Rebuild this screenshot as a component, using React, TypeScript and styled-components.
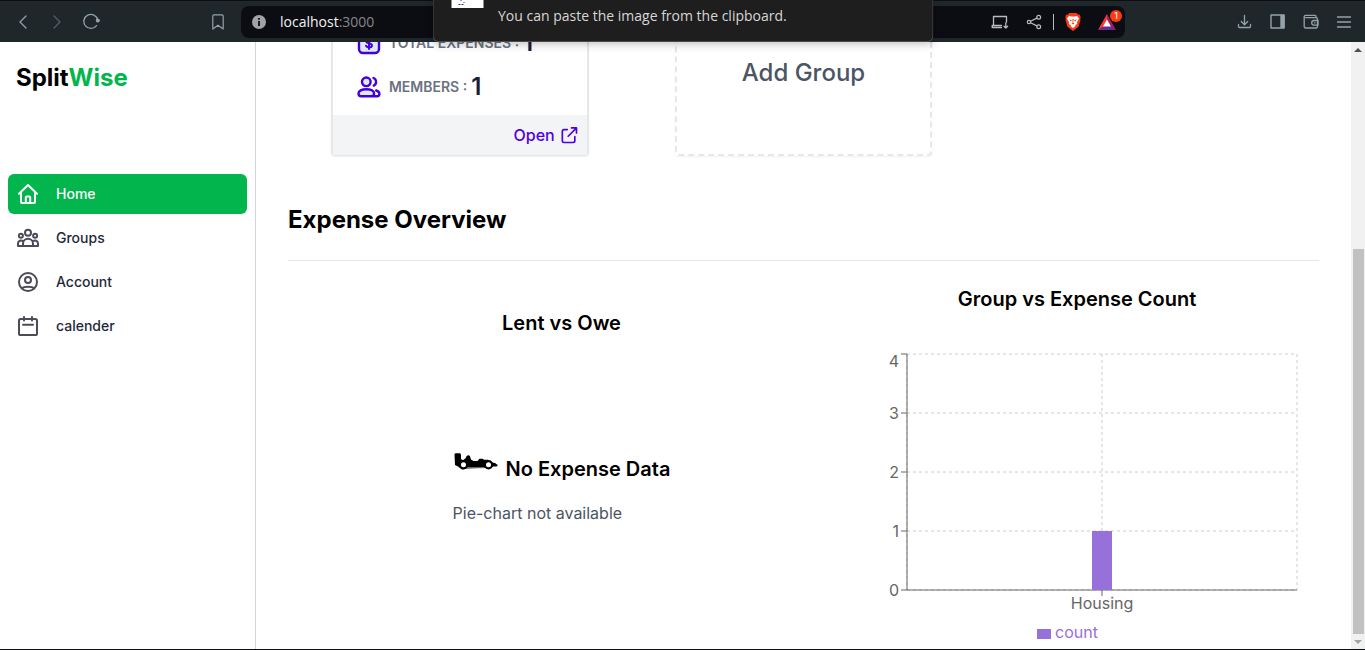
import React from "react";
import styled, { createGlobalStyle } from "styled-components";

const GlobalStyle = createGlobalStyle`
  * { box-sizing: border-box; }
  body {
    margin: 0;
    background: #fff;
    color: #000;
    font-family: Inter, "Liberation Sans", sans-serif;
    font-size: 16px;
    line-height: 24px;
  }
  h1, h2, h3, p, ul, dl, dd { margin: 0; padding: 0; }
  ul { list-style: none; }
  a { color: inherit; text-decoration: none; }
  button { border: 0; padding: 0; background: none; color: inherit; font: inherit; cursor: pointer; }
  svg { display: block; flex: none; }
`;

const Screen = styled.div`
  display: flex;
  flex-direction: column;
  height: 100vh;
  overflow: hidden;
  border-bottom: 1px solid #0d0e13;
`;

/* Browser chrome */

const Toolbar = styled.header`
  position: relative;
  display: flex;
  align-items: center;
  flex: none;
  height: 42px;
  border-top: 1px solid #0d0e13;
  background: #20272a;
  color: #93a2a9;
`;

const ToolGroup = styled.div<{ $side: "left" | "right" }>`
  display: flex;
  align-items: center;
  justify-content: ${(p) => (p.$side === "left" ? "flex-start" : "flex-end")};
  width: ${(p) => (p.$side === "left" ? 241 : 240)}px;
  padding: ${(p) => (p.$side === "left" ? "0 14px" : "0 12px")};
  gap: ${(p) => (p.$side === "left" ? 16 : 15)}px;
`;

const ToolButton = styled.button<{ $dim?: boolean; $push?: boolean }>`
  display: grid;
  place-items: center;
  width: 18px;
  height: 20px;
  opacity: ${(p) => (p.$dim ? 0.45 : 1)};
  margin-left: ${(p) => (p.$push ? "auto" : "0")};
`;

const AddressBar = styled.div`
  display: flex;
  align-items: center;
  flex: 1;
  height: 32px;
  padding: 0 9px 0 11px;
  border-radius: 8px;
  background: #0c0d12;
  color: #b9bcbf;
`;

const Url = styled.div`
  flex: 1;
  padding-left: 14px;
  outline: none;
  color: #f1f2f3;
  font: 14px/20px "Open Sans", "Noto Sans", sans-serif;
`;

const Port = styled.span`
  color: #85888c;
`;

const AddressTools = styled.div`
  display: flex;
  align-items: center;
  gap: 16px;
`;

const Divider = styled.span`
  width: 1px;
  height: 16px;
  margin: 0 -6px;
  background: #b9bcbf;
`;

const Notice = styled.div`
  position: absolute;
  top: -1px;
  left: 50%;
  z-index: 2;
  display: flex;
  width: 501px;
  height: 42px;
  transform: translateX(-50%);
  padding: 0 18px;
  border: 1px solid #4b4b4b;
  border-top: 0;
  border-radius: 0 0 6px 6px;
  background: #1e1e1e;
  box-shadow: 0 2px 8px rgba(0, 0, 0, 0.25);
  color: #d6d6d6;
  font: 14px/20px "Open Sans", "Noto Sans", sans-serif;
`;

const NoticeThumb = styled.div`
  width: 32px;
  height: 8px;
  margin-right: 15px;
  background: #fff;
`;

const NoticeText = styled.p`
  padding-top: 6px;
`;

const RewardsWrap = styled.span`
  position: relative;
  display: block;
`;

const Badge = styled.span`
  position: absolute;
  top: -4px;
  right: -6px;
  width: 12px;
  height: 12px;
  border-radius: 6px;
  background: #fb3b12;
  color: #fff;
  font-size: 9px;
  line-height: 12px;
  text-align: center;
`;

/* Page */

const Page = styled.div`
  display: flex;
  flex: 1;
  min-height: 0;
`;

const Sidebar = styled.aside`
  flex: none;
  width: 256px;
  padding: 20px 8px;
  border-right: 1px solid #d1d5db;
`;

const Brand = styled.a`
  display: block;
  padding: 0 8px;
  margin-bottom: 80px;
  font-size: 24px;
  font-weight: 700;
  line-height: 32px;
`;

const BrandAccent = styled.span`
  color: #02b54c;
`;

const NavList = styled.ul`
  display: flex;
  flex-direction: column;
  gap: 4px;
`;

const NavLink = styled.a<{ $active?: boolean }>`
  display: flex;
  align-items: center;
  gap: 16px;
  height: 40px;
  padding: 0 8px;
  border-radius: 6px;
  background: ${(p) => (p.$active ? "#02b54c" : "transparent")};
  color: ${(p) => (p.$active ? "#fff" : "#1f2937")};
  font-size: 14px;
  font-weight: 500;
  line-height: 20px;
  svg { color: ${(p) => (p.$active ? "#fff" : "#4c4b58")}; }
`;

/* Scrolled to its end, so the last section rests on the bottom edge. */
const Main = styled.main`
  display: flex;
  flex: 1;
  flex-direction: column;
  justify-content: flex-end;
  min-width: 0;
  overflow: hidden;
  padding: 0 32px;
`;

const CardGrid = styled.section`
  display: grid;
  flex: none;
  grid-template-columns: repeat(3, 1fr);
  justify-items: center;
  margin-bottom: 48px;
`;

const GroupCard = styled.article`
  width: 75%;
  border: solid #e5e7eb;
  border-width: 2px 2px 1px;
  border-radius: 4px;
  box-shadow: 0 1px 2px rgba(0, 0, 0, 0.06);
`;

const CardStats = styled.dl`
  display: flex;
  flex-direction: column;
  gap: 12px;
  padding: 12px 24px;
`;

const Stat = styled.div`
  display: flex;
  align-items: center;
  height: 32px;
`;

const StatLabel = styled.dt`
  padding: 0 4px 0 8px;
  color: #6b7280;
  font-size: 14px;
  font-weight: 600;
`;

const StatValue = styled.dd`
  color: #172036;
  font-size: 24px;
  font-weight: 600;
  line-height: 32px;
`;

const CardFooter = styled.footer`
  display: flex;
  justify-content: flex-end;
  padding: 8px;
  background: #f3f4f6;
`;

const OpenLink = styled.a`
  display: flex;
  align-items: center;
  gap: 4px;
  color: #4f00e6;
  font-weight: 500;
`;

const AddGroup = styled.button`
  width: 75%;
  padding-bottom: 24px;
  border: 2px dashed #e5e7eb;
  border-radius: 4px;
  box-shadow: 0 1px 2px rgba(0, 0, 0, 0.06);
  color: #4b5563;
  font-size: 24px;
  font-weight: 500;
  line-height: 32px;
`;

const SectionTitle = styled.h2`
  flex: none;
  padding-bottom: 24px;
  border-bottom: 1px solid #e5e7eb;
  font-size: 24px;
  font-weight: 700;
  line-height: 32px;
`;

const Charts = styled.section`
  display: flex;
  flex: none;
  padding-top: 24px;
`;

const ChartPanel = styled.div<{ $grow?: boolean }>`
  display: flex;
  flex: ${(p) => (p.$grow ? "1" : "none")};
  flex-direction: column;
  align-items: center;
  padding-top: ${(p) => (p.$grow ? 24 : 0)}px;
`;

const ChartTitle = styled.h3`
  font-size: 20px;
  font-weight: 600;
  line-height: 28px;
`;

const Empty = styled.div`
  display: flex;
  flex-direction: column;
  gap: 18px;
  padding-top: 118px;
  color: #4b5563;
`;

const EmptyTitle = styled(ChartTitle)`
  display: flex;
  gap: 8px;
  color: #000;
`;

const ChartSvg = styled.svg`
  margin-top: 36px;
  font-size: 16px;
`;

const Scrollbar = styled.div`
  display: flex;
  flex: none;
  flex-direction: column;
  align-items: center;
  width: 14px;
  background: #f1f1f1;
`;

const ScrollArrow = styled.button<{ $down?: boolean }>`
  display: grid;
  place-items: center;
  width: 14px;
  height: 15px;
  color: ${(p) => (p.$down ? "#a3a3a3" : "#505050")};
  svg { transform: ${(p) => (p.$down ? "rotate(180deg)" : "none")}; }
`;

const ScrollTrack = styled.div`
  display: flex;
  flex: 1;
  align-items: flex-end;
`;

const ScrollThumb = styled.div`
  width: 11px;
  height: calc(200% / 3);
  background: #c1c1c1;
`;

const Icon = ({ size = 24, box = 24, width = 2, children }: { size?: number; box?: number; width?: number; children: React.ReactNode }) => (
  <svg width={size} height={size} viewBox={`0 0 ${box} ${box}`} fill="none" stroke="currentColor" strokeWidth={width} strokeLinecap="round" strokeLinejoin="round" aria-hidden="true">
    {children}
  </svg>
);

const HomeIcon = () => (
  <Icon>
    <path d="M3 11.8 12 3l9 8.8M5 10v10a1 1 0 0 0 1 1h12a1 1 0 0 0 1-1V10" />
    <path d="M9.8 21v-5.500a1 1 0 0 1 1-1h2.400a1 1 0 0 1 1 1V21" />
  </Icon>
);

const GroupsIcon = () => (
  <Icon width={2}>
    <circle cx="12" cy="6.800" r="3" />
    <circle cx="4.900" cy="9.700" r="2" />
    <circle cx="19.100" cy="9.700" r="2" />
    <path d="M7 20v-2.200a5 5 0 0 1 10 0V20zM7 20H2v-2.500a3 3 0 0 1 5-2.200M17 20h5v-2.500a3 3 0 0 0-5-2.200" />
  </Icon>
);

const AccountIcon = () => (
  <Icon width={2}>
    <circle cx="12" cy="12" r="9" />
    <circle cx="12" cy="10" r="3" />
    <path d="M6 18.400c2-2.200 10-2.200 12 0" />
  </Icon>
);

const CalendarIcon = () => (
  <Icon width={2}>
    <rect x="3" y="5" width="18" height="16" rx="1.600" />
    <path d="M8 3v3.500M16 3v3.500M7 10.800h10" />
  </Icon>
);

const MoneyIcon = () => (
  <Icon width={2.4}>
    <rect x="2" y="2" width="20" height="20" rx="4" fill="#dbeafe" stroke="#4400d8" />
    <path d="M14.800 9.700c-.5-1-1.500-1.500-2.800-1.500-1.600 0-2.800.8-2.800 2 0 3 5.700 1.300 5.700 4.200 0 1.200-1.200 2-2.900 2-1.400 0-2.500-.6-3-1.600M12 6.700v11.400" stroke="#4400d8" strokeWidth="2" />
  </Icon>
);

const MembersIcon = () => (
  <Icon width={2.4}>
    <g stroke="#4400d8">
      <circle cx="9.300" cy="6.800" r="4.300" fill="#dbeafe" />
      <path d="M16.500 3a4.200 4.200 0 0 1 .3 7.600" />
      <path d="M9.300 14.200c4.500 0 7.800 1.700 7.800 4.300 0 1.700-1 2.700-2.800 2.700h-10c-1.800 0-2.800-1-2.800-2.700 0-2.600 3.300-4.300 7.800-4.300z" fill="#dbeafe" />
      <path d="M19.200 15.500c2 .6 3.200 1.800 3.200 3.500 0 1.400-.9 2.200-2.300 2.200h-4" />
    </g>
  </Icon>
);

const OpenIcon = () => (
  <Icon size={20}>
    <path d="M10 5.500H6a2 2 0 0 0-2 2V19a2 2 0 0 0 2 2h11a2 2 0 0 0 2-2v-5M15 3.500h6v6M11 13.500l9.500-9.500" />
  </Icon>
);

const RaceCar = () => (
  <svg width="45" height="28" viewBox="0 2 45 28" overflow="visible" aria-hidden="true">
    <path d="M1.500 1.500q0-1.300 1.500-1.300h3.500q1.500 0 1.500 1.500V6l2 1.200 2.500-2 1-2q2-1.800 3.500 0l1 3.300 2.500 1.500h4l2-2.200h3l1.500 1h4l2.500 2.500 4.500.8 2.700 2q0 1.500-2 1.500H40l-2 1-24 1-5 1-4-3-3-1.500z" />
    <path d="M14 14.800h17" stroke="#999" strokeWidth="1" />
    <g fill="#fff" stroke="#000" strokeWidth="2.200">
      <circle cx="10.500" cy="11.700" r="3.600" />
      <circle cx="35.500" cy="11.700" r="3.600" />
    </g>
  </svg>
);

const Arrow = () => (
  <svg width="8" height="4" viewBox="0 0 8 4" aria-hidden="true">
    <path d="M4 0 8 4H0z" fill="currentColor" />
  </svg>
);

const RewardsIcon = () => (
  <RewardsWrap>
    <svg width="18" height="16" viewBox="0 0 18 16" aria-hidden="true">
      <path d="M9 0 0 16l9-5z" fill="#ff3a2d" />
      <path d="m9 0 9 16-9-5z" fill="#9e1f63" />
      <path d="m0 16 9-6 9 6z" fill="#662d91" />
      <path d="m9 5.500 4 7H5z" fill="#fff" />
    </svg>
    <Badge>1</Badge>
  </RewardsWrap>
);

const BrowserToolbar = () => (
  <Toolbar>
    <ToolGroup $side="left">
      <ToolButton aria-label="Back"><Icon size={14} box={14} width={1.3}><path d="M10 1 4 7l6 6" /></Icon></ToolButton>
      <ToolButton aria-label="Forward" $dim><Icon size={14} box={14} width={1.3}><path d="m4 1 6 6-6 6" /></Icon></ToolButton>
      <ToolButton aria-label="Reload">
        <Icon size={18} box={18} width={1.3}>
          <path d="M14.500 12.600A7 7 0 1 1 15.700 7" />
          <circle cx="15.800" cy="7.500" r="1.400" fill="currentColor" />
        </Icon>
      </ToolButton>
      <ToolButton aria-label="Bookmark" $push><Icon size={16} box={16} width={1.2}><path d="M2.800 2A1.300 1.300 0 0 1 4 .8h8A1.300 1.300 0 0 1 13.200 2v13L8 11.200 2.800 15z" /></Icon></ToolButton>
    </ToolGroup>
    <AddressBar>
      <svg width="14" height="14" viewBox="0 0 14 14" aria-hidden="true">
        <circle cx="7" cy="7" r="7" fill="#a0a2a6" />
        <path d="M6.100 6h1.800v5H6.100zM6.100 3h1.800v1.800H6.100z" fill="#0c0d12" />
      </svg>
      <Url role="textbox" aria-label="Address" contentEditable suppressContentEditableWarning spellCheck={false}>
        localhost<Port>:3000</Port>
      </Url>
      <AddressTools>
        <ToolButton aria-label="Install app">
          <Icon size={18} box={18} width={1.3}><path d="M10.500 14.500H1.200v-2h9.300M2.500 12.500V3.500h13V9M14.800 10v5M13 13.300l1.800 1.800 1.800-1.800" /></Icon>
        </ToolButton>
        <ToolButton aria-label="Share">
          <Icon size={16} box={16} width={1.2}>
            <circle cx="3" cy="8" r="1.700" /><circle cx="12.700" cy="3.200" r="1.900" /><circle cx="12.700" cy="12.800" r="1.900" />
            <path d="m4.600 7.200 6.300-3.100M4.600 8.800l6.300 3.100" />
          </Icon>
        </ToolButton>
        <Divider />
        <ToolButton aria-label="Shields">
          <svg width="16" height="18" viewBox="0 0 16 18" aria-hidden="true">
            <path d="M4.500 0h7L13 1.600l1.700.2 1 2.700-.5 1.300.3 1.200-2 6.800L8 18l-5.500-4.200L.5 7l.3-1.200-.5-1.300 1-2.700L3 1.600z" fill="#fb3b12" />
            <path d="m4 3 2 .6h4L12 3l2 2.400-2.200 4.100.5 1.500-2 1 .2 1.200L8 15l-2.500-1.800.2-1.200-2-1 .5-1.500L2 5.400z" fill="#fff" />
            <path d="m4.200 6.300 2.600.9-1.200 1.200zM11.800 6.300l-2.600.9 1.200 1.200zM7.400 6h1.200l-.3 3.800 1.200.7L8 11.600l-1.500-1.100 1.200-.7z" fill="#fb3b12" />
          </svg>
        </ToolButton>
        <ToolButton aria-label="Rewards"><RewardsIcon /></ToolButton>
      </AddressTools>
    </AddressBar>
    <ToolGroup $side="right">
      <ToolButton aria-label="Downloads"><Icon size={16} box={16} width={1.3}><path d="M7.500 1.500v9M4.300 7.500l3.200 3.200 3.200-3.200M1.500 10.500v2a1 1 0 0 0 1 1h10a1 1 0 0 0 1-1v-2" /></Icon></ToolButton>
      <ToolButton aria-label="Side panel"><Icon size={16} box={16} width={1.4}><path d="M1 1h13v13H1z" /><path d="M11 1.500h3v12h-3z" fill="currentColor" /></Icon></ToolButton>
      <ToolButton aria-label="Wallet"><Icon size={16} box={16} width={1.3}><path d="M13 3.500V2.300a1 1 0 0 0-1-1H2.500A1.300 1.300 0 0 0 1.200 2.600v10A1.500 1.500 0 0 0 2.700 14H13a1.500 1.500 0 0 0 1.500-1.500V5A1.500 1.500 0 0 0 13 3.600H2.500" /><path d="M15 6.500h-4a2.300 2.300 0 0 0 0 4.600h4zM11.500 8.800h.5" /></Icon></ToolButton>
      <ToolButton aria-label="Menu"><Icon size={16} box={16} width={1.3}><path d="M1.500 3h13M1.500 8h13M1.500 13h13" /></Icon></ToolButton>
    </ToolGroup>
    <Notice role="status">
      <NoticeThumb>
        <svg width="32" height="8" viewBox="0 0 32 8" aria-hidden="true">
          <path d="M9 0h1v1H9zM12 2h1v1h-1z" fill="#5a10e8" />
          <path d="M7 4h2v1H7zM10 4h2v1h-2z" fill="#333" />
        </svg>
      </NoticeThumb>
      <NoticeText>You can paste the image from the clipboard.</NoticeText>
    </Notice>
  </Toolbar>
);

const navItems = [
  { label: "Home", icon: <HomeIcon />, active: true },
  { label: "Groups", icon: <GroupsIcon /> },
  { label: "Account", icon: <AccountIcon /> },
  { label: "calender", icon: <CalendarIcon /> },
];

const PLOT = { left: 72, right: 462, top: 5, bottom: 241 };
const MAX = 4;
const ticks = [0, 1, 2, 3, 4];
const data = [{ name: "Housing", count: 1 }];

const ExpenseChart = () => {
  const y = (v: number) => PLOT.bottom - (v * (PLOT.bottom - PLOT.top)) / MAX;
  const step = (PLOT.right - PLOT.left) / data.length;
  const x = (i: number) => PLOT.left + step * (i + 0.5);
  return (
    <ChartSvg width="484" height="300" role="img" aria-label="Expense count by group">
      <g stroke="#ccc" strokeDasharray="3 3">
        {ticks.map((v) => <line key={v} x1={PLOT.left} x2={PLOT.right} y1={y(v)} y2={y(v)} />)}
        {[PLOT.left, ...data.map((_, i) => x(i)), PLOT.right].map((v) => <line key={v} x1={v} x2={v} y1={PLOT.top} y2={PLOT.bottom} />)}
      </g>
      <g stroke="#666">
        <line x1={PLOT.left} x2={PLOT.right} y1={PLOT.bottom} y2={PLOT.bottom} />
        <line x1={PLOT.left} x2={PLOT.left} y1={PLOT.top} y2={PLOT.bottom} />
        {ticks.map((v) => <line key={v} x1={PLOT.left - 6} x2={PLOT.left} y1={y(v)} y2={y(v)} />)}
        {data.map((d, i) => <line key={d.name} x1={x(i)} x2={x(i)} y1={PLOT.bottom} y2={PLOT.bottom + 6} />)}
      </g>
      <g fill="#666">
        {ticks.map((v) => <text key={v} x={PLOT.left - 8} y={Math.max(y(v), 12) + 6} textAnchor="end">{v}</text>)}
        {data.map((d, i) => <text key={d.name} x={x(i)} y={PLOT.bottom + 19} textAnchor="middle">{d.name}</text>)}
      </g>
      <g fill="#9671d9">
        {data.map((d, i) => <rect key={d.name} x={x(i) - 10} y={y(d.count)} width="20" height={PLOT.bottom - y(d.count)} />)}
        <rect x="202" y="280" width="14" height="10" />
        <text x="220" y="289">count</text>
      </g>
    </ChartSvg>
  );
};

export default function App() {
  return (
    <Screen>
      <GlobalStyle />
      <BrowserToolbar />
      <Page>
        <Sidebar>
          <Brand href="#">Split<BrandAccent>Wise</BrandAccent></Brand>
          <nav>
            <NavList>
              {navItems.map((item) => (
                <li key={item.label}>
                  <NavLink href="#" $active={item.active}>{item.icon}{item.label}</NavLink>
                </li>
              ))}
            </NavList>
          </nav>
        </Sidebar>
        <Main>
          <CardGrid>
            <GroupCard>
              <CardStats>
                <Stat><MoneyIcon /><StatLabel>TOTAL EXPENSES :</StatLabel><StatValue>1</StatValue></Stat>
                <Stat><MembersIcon /><StatLabel>MEMBERS :</StatLabel><StatValue>1</StatValue></Stat>
              </CardStats>
              <CardFooter>
                <OpenLink href="#">Open <OpenIcon /></OpenLink>
              </CardFooter>
            </GroupCard>
            <AddGroup>Add Group</AddGroup>
          </CardGrid>
          <SectionTitle>Expense Overview</SectionTitle>
          <Charts>
            <ChartPanel $grow>
              <ChartTitle>Lent vs Owe</ChartTitle>
              <Empty>
                <EmptyTitle><RaceCar />No Expense Data</EmptyTitle>
                <p>Pie-chart not available</p>
              </Empty>
            </ChartPanel>
            <ChartPanel>
              <ChartTitle>Group vs Expense Count</ChartTitle>
              <ExpenseChart />
            </ChartPanel>
          </Charts>
        </Main>
        <Scrollbar>
          <ScrollArrow aria-label="Scroll up"><Arrow /></ScrollArrow>
          <ScrollTrack><ScrollThumb /></ScrollTrack>
          <ScrollArrow $down aria-label="Scroll down"><Arrow /></ScrollArrow>
        </Scrollbar>
      </Page>
    </Screen>
  );
}
